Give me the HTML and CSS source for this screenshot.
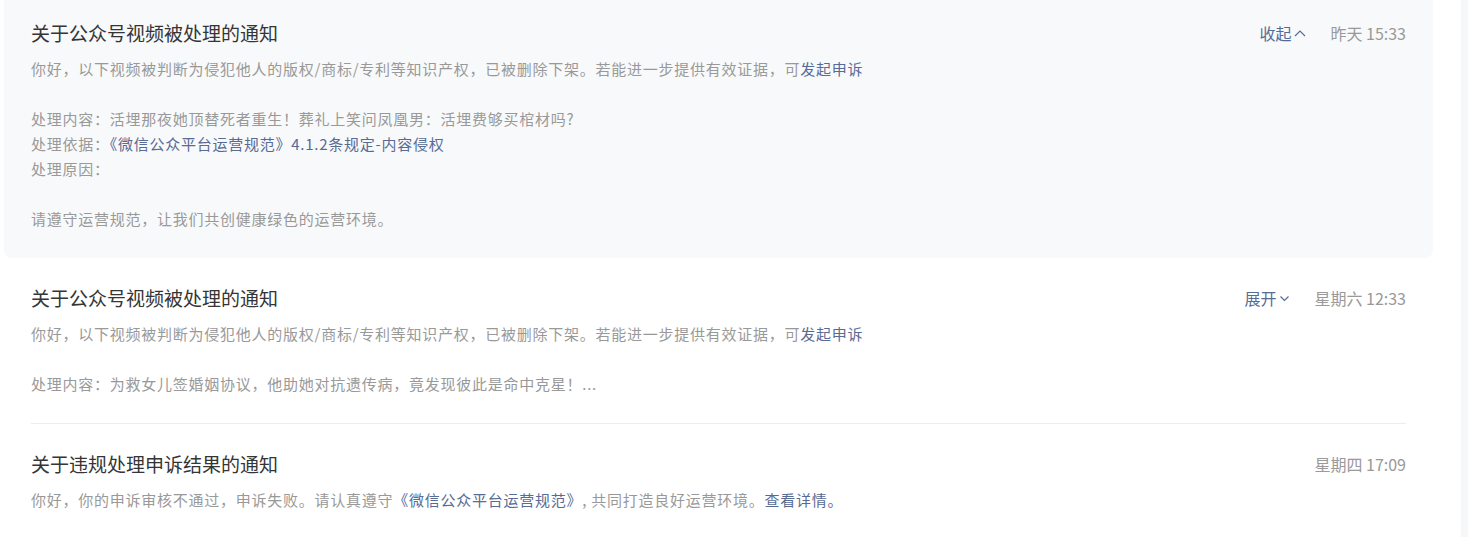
FILE: index.html
```html
<!DOCTYPE html>
<html lang="zh-CN">
<head>
<meta charset="utf-8">
<title>通知</title>
<link rel="stylesheet" href="styles.css">
</head>
<body>
<div class="page">
  <div class="content">
    <div class="list">
      <div class="item expanded">
        <div class="item-inner">
          <div class="head">
            <div class="title">关于公众号视频被处理的通知</div>
            <div class="meta">
              <span class="toggle">收起<svg class="chev" width="12" height="8" viewBox="0 0 12 8"><polyline points="1,7 6,2 11,7" fill="none" stroke="#576b95" stroke-width="1.2"/></svg></span>
              <span class="time">昨天 15:33</span>
            </div>
          </div>
          <p class="desc">你好，以下视频被判断为侵犯他人的版权/商标/专利等知识产权，已被删除下架。若能进一步提供有效证据，可<span class="link">发起申诉</span></p>
          <div class="detail">
            <p>处理内容：活埋那夜她顶替死者重生！葬礼上笑问凤凰男：活埋费够买棺材吗?</p>
            <p>处理依据：<span class="link">《微信公众平台运营规范》4.1.2条规定-内容侵权</span></p>
            <p>处理原因：</p>
          </div>
          <p class="detail">请遵守运营规范，让我们共创健康绿色的运营环境。</p>
        </div>
      </div>
      <div class="item">
        <div class="item-inner">
          <div class="head">
            <div class="title">关于公众号视频被处理的通知</div>
            <div class="meta">
              <span class="toggle">展开<svg class="chev" width="11" height="7" viewBox="0 0 11 7"><polyline points="1.5,1.5 5.5,5.5 9.5,1.5" fill="none" stroke="#576b95" stroke-width="1.2"/></svg></span>
              <span class="time">星期六 12:33</span>
            </div>
          </div>
          <p class="desc">你好，以下视频被判断为侵犯他人的版权/商标/专利等知识产权，已被删除下架。若能进一步提供有效证据，可<span class="link">发起申诉</span></p>
          <div class="detail">
            <p>处理内容：为救女儿签婚姻协议，他助她对抗遗传病，竟发现彼此是命中克星！...</p>
          </div>
        </div>
      </div>
      <div class="item">
        <div class="item-inner">
          <div class="head">
            <div class="title">关于违规处理申诉结果的通知</div>
            <div class="meta">
              <span class="time">星期四 17:09</span>
            </div>
          </div>
          <p class="desc">你好，你的申诉审核不通过，申诉失败。请认真遵守<span class="link">《微信公众平台运营规范》</span>, 共同打造良好运营环境。<span class="link">查看详情。</span></p>
        </div>
      </div>
    </div>
  </div>
  <div class="scrollbar"></div>
</div>
</body>
</html>
```
FILE: styles.css
```css
* { box-sizing: border-box; }
html, body {
  margin: 0;
  padding: 0;
  background: #fff;
  overflow: hidden;
}
body {
  font-family: "Noto Sans CJK SC", "Liberation Sans", sans-serif;
  color: #353535;
}
.page {
  display: flex;
  width: 1468px;
  height: 537px;
}
.content {
  flex: 1;
  padding-left: 4px;
  padding-right: 28px;
}
.scrollbar {
  width: 7px;
  background: #f6f7f8;
}
.list {
  margin-top: -7px;
}
.item {
  padding: 0 27px;
  border-radius: 8px;
}
.item.expanded {
  background: #f8f9fa;
}
.item-inner {
  padding: 26px 0 27px;
  border-bottom: 1px solid #ededed;
}
.item.expanded .item-inner {
  border-bottom: none;
}
.head {
  display: flex;
  align-items: center;
  justify-content: space-between;
  height: 28px;
}
.title {
  font-size: 19px;
  line-height: 28px;
  color: #353535;
}
.meta {
  display: flex;
  align-items: center;
  gap: 24px;
  font-size: 16px;
  line-height: 28px;
}
.toggle {
  display: flex;
  align-items: center;
  gap: 3px;
  color: #576b95;
}
.chev { display: block; }
.time {
  color: #999;
}
p { margin: 0; }
.desc {
  margin-top: 9px;
  font-size: 15px;
  letter-spacing: 0.75px;
  line-height: 25px;
  color: #999;
}
.detail {
  margin-top: 25px;
  font-size: 15px;
  letter-spacing: 0.75px;
  line-height: 25px;
  color: #999;
}
.link {
  color: #576b95;
}
```
